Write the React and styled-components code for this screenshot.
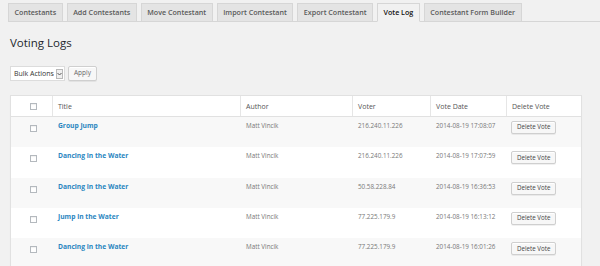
import React from "react";
import styled, { createGlobalStyle } from "styled-components";

const Global = createGlobalStyle`
  html, body { margin: 0; padding: 0; background: #f1f1f1; }
  body { font-family: "Open Sans", "DejaVu Sans", sans-serif; color: #444; width: 600px; height: 266px; overflow: hidden; }
  * { box-sizing: border-box; }
`;

const Page = styled.div`
  padding: 3px 19px 0 10px;
`;

const TabBar = styled.nav`
  display: flex;
  gap: 4px;
  margin-left: -2px;
  margin-right: -19px;
  border-bottom: 1px solid #d6d6d6;
`;

const Tab = styled.a`
  display: block;
  height: 19px;
  margin-bottom: -1px;
  padding: 0 5.5px;
  border: 1px solid #d6d6d6;
  border-bottom-color: ${(p) => (p.$active ? "#f1f1f1" : "#d6d6d6")};
  background: ${(p) => (p.$active ? "#f1f1f1" : "#e4e4e4")};
  color: ${(p) => (p.$active ? "#111" : "#5a5a5a")};
  font-size: 7.15px;
  font-weight: 600;
  line-height: 17px;
  white-space: nowrap;
  text-decoration: none;
`;

const Heading = styled.h2`
  margin: 13px 0 0;
  font-size: 11.5px;
  line-height: 16px;
  font-weight: 400;
  color: #23282d;
`;

const Toolbar = styled.div`
  display: flex;
  align-items: center;
  gap: 3px;
  margin-top: 15px;
  height: 15px;
`;

const Select = styled.div`
  display: flex;
  align-items: center;
  justify-content: space-between;
  width: 55px;
  height: 15px;
  padding: 0 1px 0 3px;
  background: #fff;
  border: 1px solid #dcdcdc;
  font-size: 7px;
  color: #333;
`;

const Arrow = styled.span`
  display: flex;
  align-items: center;
  justify-content: center;
  width: 7px;
  height: 10px;
  border: 1px solid #b8b8b8;
  background: #efefef;
`;

const Button = styled.button`
  display: inline-flex;
  align-items: center;
  justify-content: center;
  height: ${(p) => p.$h || 15}px;
  padding: 0 ${(p) => p.$px || 5}px;
  margin: 0;
  background: #f7f7f7;
  border: 1px solid #cfcfcf;
  border-radius: 2px;
  box-shadow: 0 1px 0 #fff inset, 0 1px 0 rgba(0,0,0,0.06);
  font-family: inherit;
  font-size: ${(p) => p.$size || 6.5}px;
  color: ${(p) => p.$color || "#666"};
  line-height: 1;
  white-space: nowrap;
`;

const Table = styled.div`
  margin-top: 14px;
  width: 572px;
  border: 1px solid #e1e1e1;
  background: #fff;
  box-shadow: 0 1px 1px rgba(0,0,0,0.04);
`;

const cols = "41px 188px 112px 78px 76px 75px";

const HeadRow = styled.div`
  display: grid;
  grid-template-columns: ${cols};
  height: 21px;
  border-bottom: 1px solid #e1e1e1;
  background: #fff;
`;

const Th = styled.div`
  display: flex;
  align-items: center;
  padding: 0 5px;
  border-left: 1px solid #e6e6e6;
  font-size: 7px;
  color: #555;
  white-space: nowrap;
`;

const CheckCell = styled.div`
  display: flex;
  align-items: ${(p) => (p.$head ? "center" : "flex-start")};
  padding: ${(p) => (p.$head ? "0 0 0 19px" : "8px 0 0 19px")};
`;

const Box = styled.span`
  display: block;
  width: 7px;
  height: 7px;
  border: 1px solid #b4b9be;
  background: #fff;
  box-shadow: inset 0 1px 1px rgba(0,0,0,0.06);
`;

const Row = styled.div`
  display: grid;
  grid-template-columns: ${cols};
  height: 30.35px;
  background: ${(p) => (p.$alt ? "#f8f8f8" : "#fff")};
`;

const Td = styled.div`
  padding: 4px 5px 0;
  border-left: 1px solid transparent;
  font-size: 6.3px;
  line-height: 10px;
  color: #777;
  white-space: nowrap;
`;

const ButtonTd = styled(Td)`
  padding-left: 4px;
`;

const TitleLink = styled.a`
  font-size: 6.7px;
  font-weight: 700;
  color: #2a86bf;
  text-decoration: none;
`;

const tabs = [
  "Contestants",
  "Add Contestants",
  "Move Contestant",
  "Import Contestant",
  "Export Contestant",
  "Vote Log",
  "Contestant Form Builder",
];

const rows = [
  ["Group Jump", "216.240.11.226", "2014-08-19 17:08:07"],
  ["Dancing in the Water", "216.240.11.226", "2014-08-19 17:07:59"],
  ["Dancing in the Water", "50.58.228.84", "2014-08-19 16:36:53"],
  ["Jump in the Water", "77.225.179.9", "2014-08-19 16:13:12"],
  ["Dancing in the Water", "77.225.179.9", "2014-08-19 16:01:26"],
];

export default function App() {
  return (
    <>
      <Global />
      <Page>
        <TabBar>
          {tabs.map((t) => (
            <Tab key={t} $active={t === "Vote Log"}>
              {t}
            </Tab>
          ))}
        </TabBar>
        <Heading>Voting Logs</Heading>
        <Toolbar>
          <Select>
            <span>Bulk Actions</span>
            <Arrow>
              <svg width="5" height="4" viewBox="0 0 5 4">
                <path d="M0.5 1 L2.5 3 L4.5 1" fill="none" stroke="#555" strokeWidth="1" />
              </svg>
            </Arrow>
          </Select>
          <Button $h={15} $px={5}>Apply</Button>
        </Toolbar>
        <Table>
          <HeadRow>
            <CheckCell $head>
              <Box />
            </CheckCell>
            <Th>Title</Th>
            <Th>Author</Th>
            <Th>Voter</Th>
            <Th>Vote Date</Th>
            <Th>Delete Vote</Th>
          </HeadRow>
          {rows.map((r, i) => (
            <Row key={i} $alt={i % 2 === 0}>
              <CheckCell>
                <Box />
              </CheckCell>
              <Td>
                <TitleLink href="#">{r[0]}</TitleLink>
              </Td>
              <Td>Matt Vincik</Td>
              <Td>{r[1]}</Td>
              <Td>{r[2]}</Td>
              <ButtonTd>
                <Button $h={13} $px={5} $size={6.2} $color="#444">Delete Vote</Button>
              </ButtonTd>
            </Row>
          ))}
        </Table>
      </Page>
    </>
  );
}
